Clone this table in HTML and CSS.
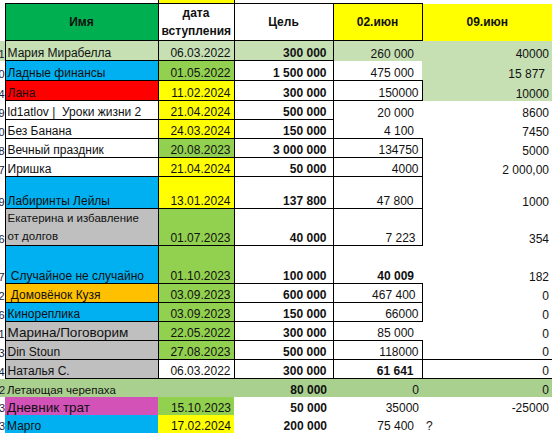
FILE: index.html
```html
<!DOCTYPE html>
<html lang="ru">
<head>
<meta charset="utf-8">
<link rel="stylesheet" href="styles.css">
</head>
<body>
<table class="sheet">
  <colgroup>
    <col class="c-num"><col class="c-name"><col class="c-date"><col class="c-goal"><col class="c-jun2"><col class="c-jun9">
  </colgroup>
  <tr class="h-top">
    <td></td><td></td><td class="bg-yellow b-lr"></td><td></td><td></td><td></td>
  </tr>
  <tr class="h-head">
    <td></td>
    <td class="bg-hgreen b head">Имя</td>
    <td class="b head two">дата<br>вступления</td>
    <td class="b head">Цель</td>
    <td class="bg-yellow b head">02.июн</td>
    <td class="bg-yellow head">09.июн</td>
  </tr>
  <tr class="r20 bg-lgreen">
    <td class="num">1</td>
    <td class="b name">Мария Мирабелла</td>
    <td class="b date">06.03.2022</td>
    <td class="b goal">300 000</td>
    <td class="v sp">260 000</td>
    <td class="v9">40000</td>
  </tr>
  <tr class="r20">
    <td class="num">0</td>
    <td class="b name bg-blue">Ладные финансы</td>
    <td class="b date bg-green">01.05.2022</td>
    <td class="b goal">1 500 000</td>
    <td class="v sp">475 000</td>
    <td class="v9 sp bg-lgreen">15 877</td>
  </tr>
  <tr class="r20">
    <td class="num">4</td>
    <td class="b name bg-red">Лана</td>
    <td class="b date bg-yellow">11.02.2024</td>
    <td class="b goal">300 000</td>
    <td class="b v">150000</td>
    <td class="v9 bg-lgreen">10000</td>
  </tr>
  <tr class="r19">
    <td class="num">9</td>
    <td class="b name">ld1atlov |&nbsp; Уроки жизни 2</td>
    <td class="b date bg-yellow">21.04.2024</td>
    <td class="b goal">500 000</td>
    <td class="v sp">20 000</td>
    <td class="v9">8600</td>
  </tr>
  <tr class="r19">
    <td class="num">0</td>
    <td class="b name">Без Банана</td>
    <td class="b date bg-yellow">24.03.2024</td>
    <td class="b goal">150 000</td>
    <td class="v sp">4 100</td>
    <td class="v9">7450</td>
  </tr>
  <tr class="r19">
    <td class="num">8</td>
    <td class="b name">Вечный праздник</td>
    <td class="b date bg-green">20.08.2023</td>
    <td class="b goal">3 000 000</td>
    <td class="b v">134750</td>
    <td class="v9">5000</td>
  </tr>
  <tr class="r19">
    <td class="num">7</td>
    <td class="b name">Иришка</td>
    <td class="b date bg-yellow">21.04.2024</td>
    <td class="b goal">50 000</td>
    <td class="b v">4000</td>
    <td class="v9">2 000,00</td>
  </tr>
  <tr class="r32">
    <td class="num">9</td>
    <td class="b name bg-blue">Лабиринты Лейлы</td>
    <td class="b date bg-yellow">13.01.2024</td>
    <td class="b goal">137 800</td>
    <td class="b v sp">47 800</td>
    <td class="v9">1000</td>
  </tr>
  <tr class="r36">
    <td class="num">6</td>
    <td class="b name bg-gray wrap">Екатерина и избавление<br>от долгов</td>
    <td class="b date bg-green">01.07.2023</td>
    <td class="b goal">40 000</td>
    <td class="b v sp6">7 223</td>
    <td class="v9">354</td>
  </tr>
  <tr class="r38">
    <td class="num">7</td>
    <td class="b name bg-blue">&nbsp;Случайное не случайно</td>
    <td class="b date bg-green">01.10.2023</td>
    <td class="b goal">100 000</td>
    <td class="v sp strong">40 009</td>
    <td class="v9">182</td>
  </tr>
  <tr class="r19">
    <td class="num">2</td>
    <td class="b name bg-orange">&nbsp;Домовёнок Кузя</td>
    <td class="b date bg-green">03.09.2023</td>
    <td class="b goal">600 000</td>
    <td class="b v sp6">467 400</td>
    <td class="v9">0</td>
  </tr>
  <tr class="r19">
    <td class="num">6</td>
    <td class="b name bg-blue">Кинореплика</td>
    <td class="b date bg-green">03.09.2023</td>
    <td class="b goal">150 000</td>
    <td class="b v">66000</td>
    <td class="v9">0</td>
  </tr>
  <tr class="r19">
    <td class="num">1</td>
    <td class="b name bg-gray big">Марина/Поговорим</td>
    <td class="b date bg-green">22.05.2022</td>
    <td class="b goal">300 000</td>
    <td class="v sp">85 000</td>
    <td class="v9">0</td>
  </tr>
  <tr class="r19">
    <td class="num">3</td>
    <td class="b name bg-gray">Din Stoun</td>
    <td class="b date bg-green">27.08.2023</td>
    <td class="b goal">500 000</td>
    <td class="b v">118000</td>
    <td class="v9">0</td>
  </tr>
  <tr class="r19">
    <td class="num">4</td>
    <td class="b name bg-gray">Наталья С.</td>
    <td class="b date">06.03.2022</td>
    <td class="b goal">300 000</td>
    <td class="b v sp strong">61 641</td>
    <td class="v9 b-tb">0</td>
  </tr>
  <tr class="r19 bg-turtle">
    <td class="num">2</td>
    <td class="name small">Летающая черепаха</td>
    <td class="date"></td>
    <td class="goal">80 000</td>
    <td class="v">0</td>
    <td class="v9">0</td>
  </tr>
  <tr class="r19">
    <td class="num">3</td>
    <td class="name bg-magenta big">Дневник трат</td>
    <td class="date bg-green">15.10.2023</td>
    <td class="goal">50 000</td>
    <td class="v">35000</td>
    <td class="v9">-25000</td>
  </tr>
  <tr class="r19">
    <td class="num">3</td>
    <td class="name bg-blue">Марго</td>
    <td class="date bg-yellow">17.02.2024</td>
    <td class="goal">200 000</td>
    <td class="v sp">75 400</td>
    <td class="v9 q">?</td>
  </tr>
</table>
</body>
</html>
```

FILE: styles.css
```css
html, body {
  margin: 0;
  padding: 0;
  background: #ffffff;
}

.sheet {
  border-collapse: collapse;
  table-layout: fixed;
  width: 552px;
  font-family: "Liberation Sans", Arial, sans-serif;
  font-size: 12px;
  color: #111111;
}

.c-num { width: 5px; }
.c-name { width: 153px; }
.c-date { width: 76px; }
.c-goal { width: 99px; }
.c-jun2 { width: 89px; }
.c-jun9 { width: 130px; }

.sheet td {
  padding: 0 3px;
  line-height: 14px;
  vertical-align: bottom;
  white-space: nowrap;
  overflow: hidden;
}

.h-top td { height: 3px; padding: 0; line-height: 0; }
.h-head td { height: 35px; }
.r20 td { height: 19px; }
.r19 td { height: 18px; }
.r32 td { height: 31px; }
.r36 td { height: 35px; }
.r38 td { height: 37px; }

.b { border: 1px solid #000000; }
.b-lr { border-left: 1px solid #000000; border-right: 1px solid #000000; }
.b-tb { border-top: 1px solid #000000; border-bottom: 1px solid #000000; }

.head {
  font-weight: bold;
  text-align: center;
  vertical-align: middle !important;
}
.two { line-height: 18px !important; }

.sheet td.num {
  padding: 0;
  direction: rtl;
  text-align: right;
  font-size: 11px;
  color: #1b1b3a;
  text-overflow: clip;
}

.name { text-align: left; }
.sheet td.name { padding-left: 2px; }
.wrap {
  white-space: nowrap;
  line-height: 18px !important;
  font-size: 11.5px;
}
.big { font-size: 13.5px; }
.small { font-size: 11.5px; }

.date { text-align: right; }
.sheet td.date { padding-right: 3px; }

.goal { text-align: right; font-weight: bold; }
.sheet td.goal { padding-right: 6px; }

.v { text-align: right; }
.sheet td.v { padding-right: 3px; }
.sheet td.sp { padding-right: 8px; }
.sheet td.sp6 { padding-right: 6px; }
.strong { font-weight: bold; }

.v9 { text-align: right; }
.sheet td.v9 { padding-right: 3px; }
.sheet td.v9.sp { padding-right: 7px; }
.sheet td.q { text-align: left; padding-left: 4px; }

.bg-hgreen { background: #00b050; }
.bg-lgreen { background: #c6e0b4; }
.bg-turtle { background: #a9d08e; }
.bg-yellow { background: #ffff00; }
.bg-green { background: #92d050; }
.bg-blue { background: #00b0f0; }
.bg-red { background: #ff0000; }
.bg-gray { background: #bfbfbf; }
.bg-orange { background: #ffc000; }
.bg-magenta { background: #d252b8; }
```
